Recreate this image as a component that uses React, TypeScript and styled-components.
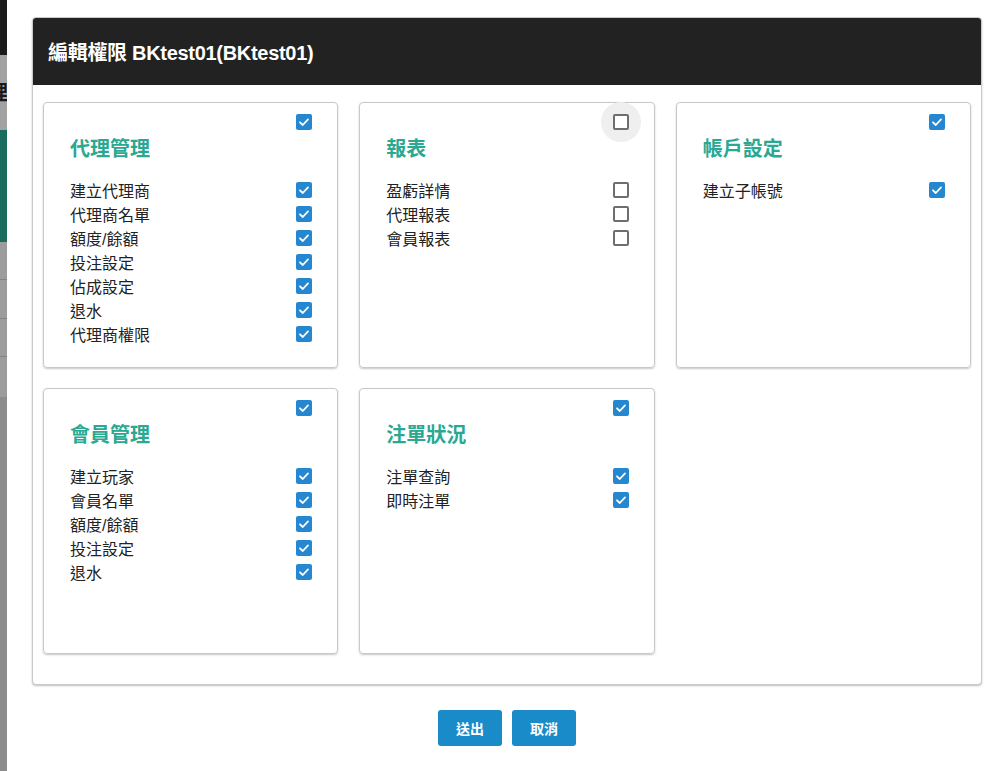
import React from "react";
import styled, { createGlobalStyle, css } from "styled-components";

const GlobalStyle = createGlobalStyle`
  html, body { margin: 0; padding: 0; background: #fff; }
  body {
    font-family: "Liberation Sans", "Noto Sans CJK TC", sans-serif;
    color: #222;
  }
  * { box-sizing: border-box; }
`;

const Page = styled.div`
  display: flex;
  width: 1005px;
  height: 771px;
  overflow: hidden;
`;

const BackStrip = styled.div`
  width: 7px;
  flex: none;
  display: flex;
  flex-direction: column;
  overflow: hidden;
`;

const StripSeg = styled.div<{ $h?: number; $bg: string; $line?: boolean }>`
  height: ${(p) => (p.$h ? `${p.$h}px` : "auto")};
  flex: ${(p) => (p.$h ? "none" : "1")};
  background: ${(p) => p.$bg};
  border-bottom: ${(p) => (p.$line ? "1px solid #838383" : "none")};
  display: flex;
  justify-content: flex-end;
  align-items: center;
  overflow: hidden;
`;

const StripText = styled.span`
  font-size: 20px;
  font-weight: 700;
  color: #1a1a1a;
  margin-right: -1px;
  white-space: nowrap;
  line-height: 1;
`;

const Main = styled.div`
  flex: 1;
  background: #fff;
  padding: 17px 23px 0 25px;
  display: flex;
  flex-direction: column;
`;

const Panel = styled.div`
  width: 950px;
  border: 1px solid #c9c9c9;
  border-radius: 4px;
  box-shadow: 0 1px 2px rgba(0, 0, 0, 0.25);
  background: #fff;
  overflow: hidden;
`;

const Header = styled.div`
  height: 67px;
  background: #222222;
  display: flex;
  align-items: center;
  padding-left: 15px;
`;

const Title = styled.h1`
  margin: 0;
  color: #fff;
  font-size: 20px;
  font-weight: 700;
  letter-spacing: -0.3px;
`;

const Body = styled.div`
  display: grid;
  grid-template-columns: repeat(3, 1fr);
  column-gap: 21px;
  row-gap: 20px;
  padding: 17px 10px 30px 10px;
`;

const Card = styled.section`
  height: 266px;
  border: 1px solid #c8c8c8;
  border-radius: 4px;
  box-shadow: 0 1px 2px rgba(0, 0, 0, 0.22);
  padding: 11px 25px 0 26px;
  display: flex;
  flex-direction: column;
`;

const CardTop = styled.div`
  display: flex;
  justify-content: flex-end;
  height: 16px;
`;

const CardTitle = styled.h2`
  margin: 7px 0 17px;
  font-size: 20px;
  line-height: 24px;
  font-weight: 700;
  color: #2aa891;
`;

const Row = styled.div`
  display: flex;
  justify-content: space-between;
  align-items: center;
  height: 24px;
  font-size: 16px;
  color: #222;
`;

const BoxWrap = styled.span<{ $ripple?: boolean }>`
  position: relative;
  width: 16px;
  height: 16px;
  display: inline-flex;
  ${(p) =>
    p.$ripple &&
    css`
      &::before {
        content: "";
        position: absolute;
        left: -12px;
        top: -12px;
        width: 40px;
        height: 40px;
        border-radius: 50%;
        background: #efefef;
      }
    `}
`;

const Box = styled.span<{ $checked: boolean }>`
  position: relative;
  width: 16px;
  height: 16px;
  border-radius: 2px;
  display: inline-flex;
  align-items: center;
  justify-content: center;
  ${(p) =>
    p.$checked
      ? css`
          background: #2587cf;
        `
      : css`
          border: 2px solid #6e6e6e;
          background: #fff;
        `}
`;

const Check = ({ checked, ripple }: { checked: boolean; ripple?: boolean }) => (
  <BoxWrap $ripple={ripple}>
    <Box $checked={checked}>
      {checked && (
        <svg width="16" height="16" viewBox="0 0 16 16">
          <polyline
            points="4,8.3 6.8,11 12,5.4"
            fill="none"
            stroke="#fff"
            strokeWidth="1.8"
            strokeLinecap="round"
            strokeLinejoin="round"
          />
        </svg>
      )}
    </Box>
  </BoxWrap>
);

const Footer = styled.div`
  width: 950px;
  display: flex;
  justify-content: center;
  gap: 10px;
  margin-top: 25px;
`;

const Button = styled.button`
  width: 64px;
  height: 36px;
  border: none;
  border-radius: 3px;
  background: #1a8bc9;
  color: #fff;
  font-family: "Liberation Sans", "Noto Sans CJK TC", sans-serif;
  font-size: 14px;
  font-weight: 700;
  cursor: pointer;
`;

type Group = { title: string; all: boolean; ripple?: boolean; items: [string, boolean][] };

const groups: Group[] = [
  {
    title: "代理管理",
    all: true,
    items: [
      ["建立代理商", true],
      ["代理商名單", true],
      ["額度/餘額", true],
      ["投注設定", true],
      ["佔成設定", true],
      ["退水", true],
      ["代理商權限", true],
    ],
  },
  {
    title: "報表",
    all: false,
    ripple: true,
    items: [
      ["盈虧詳情", false],
      ["代理報表", false],
      ["會員報表", false],
    ],
  },
  {
    title: "帳戶設定",
    all: true,
    items: [["建立子帳號", true]],
  },
  {
    title: "會員管理",
    all: true,
    items: [
      ["建立玩家", true],
      ["會員名單", true],
      ["額度/餘額", true],
      ["投注設定", true],
      ["退水", true],
    ],
  },
  {
    title: "注單狀況",
    all: true,
    items: [
      ["注單查詢", true],
      ["即時注單", true],
    ],
  },
];

export default function App() {
  return (
    <Page>
      <GlobalStyle />
      <BackStrip>
        <StripSeg $h={55} $bg="#1b1b1b" />
        <StripSeg $h={75} $bg="#a2a2a2">
          <StripText>理</StripText>
        </StripSeg>
        <StripSeg $h={112} $bg="#1a6c5f" />
        <StripSeg $h={38} $bg="#9c9c9c" $line />
        <StripSeg $h={39} $bg="#9c9c9c" $line />
        <StripSeg $h={38} $bg="#9c9c9c" $line />
        <StripSeg $h={40} $bg="#9c9c9c" />
        <StripSeg $bg="#8c8c8c" />
      </BackStrip>
      <Main>
        <Panel>
          <Header>
            <Title>編輯權限 BKtest01(BKtest01)</Title>
          </Header>
          <Body>
            {groups.map((g) => (
              <Card key={g.title}>
                <CardTop>
                  <Check checked={g.all} ripple={g.ripple} />
                </CardTop>
                <CardTitle>{g.title}</CardTitle>
                {g.items.map(([label, on]) => (
                  <Row key={label}>
                    <span>{label}</span>
                    <Check checked={on} />
                  </Row>
                ))}
              </Card>
            ))}
          </Body>
        </Panel>
        <Footer>
          <Button>送出</Button>
          <Button>取消</Button>
        </Footer>
      </Main>
    </Page>
  );
}
